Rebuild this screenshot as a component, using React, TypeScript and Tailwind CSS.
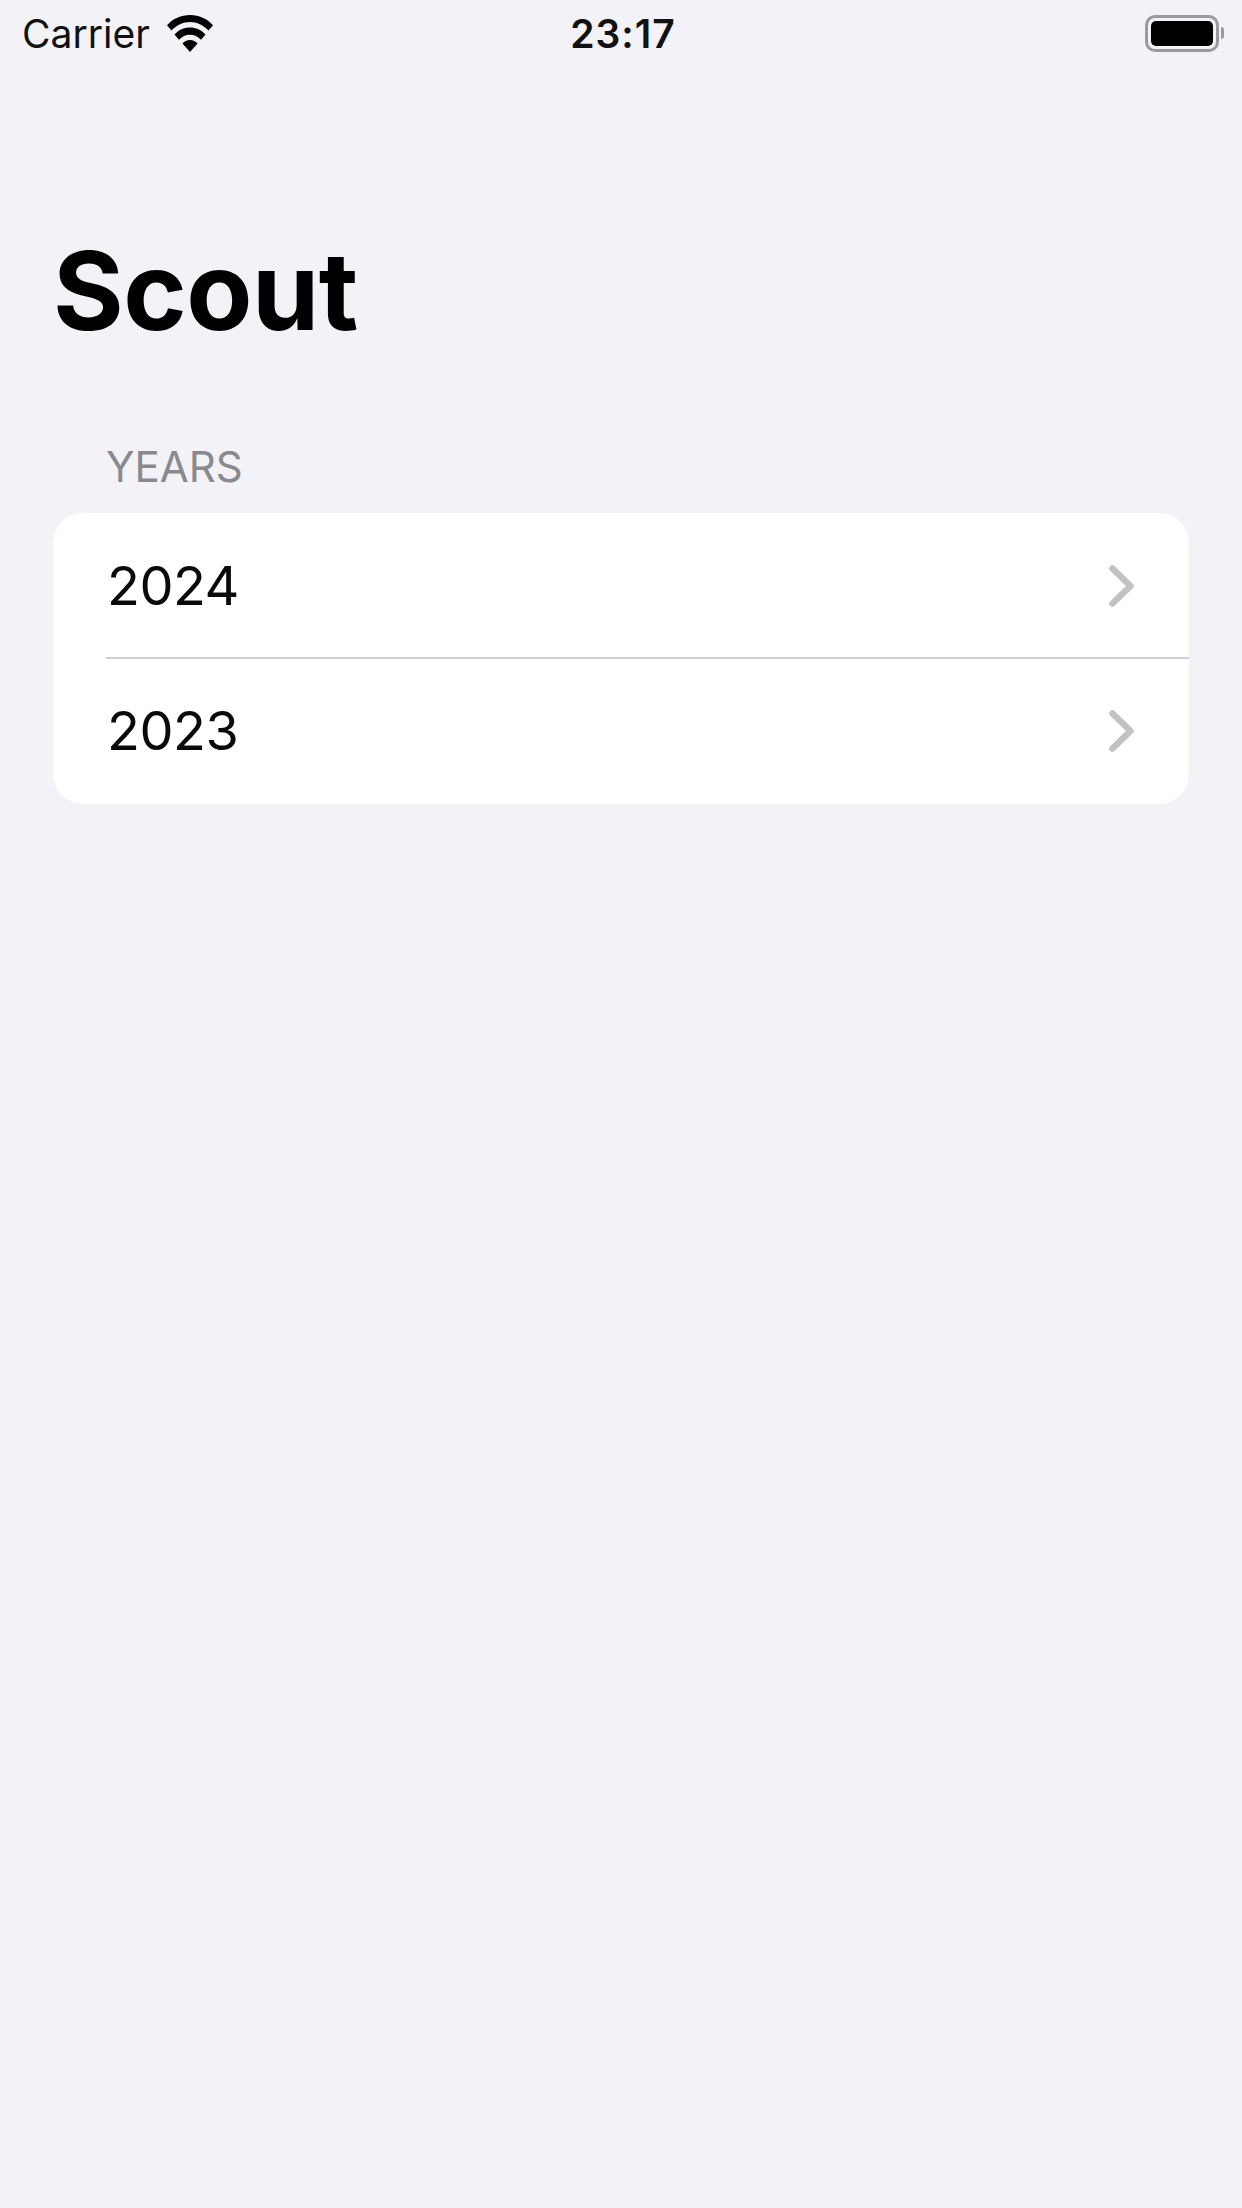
function WifiIcon() {
  return (
    <svg viewBox="0 0 48 37" className="w-[48px] h-[37px] ml-[16px]">
      <path d="M24 0C15 0 7 3.700 1 10.200l4.500 5.200C10.500 10.200 17 7 24 7s13.500 3.200 18.500 8.400l4.500-5.200C41 3.700 33 0 24 0z" fill="#000" />
      <path d="M24 12.500c-6 0-11.500 2.600-15.500 7l4.500 5.200c2.900-3.100 6.700-5 11-5s8.100 1.900 11 5l4.500-5.200c-4-4.400-9.500-7-15.500-7z" fill="#000" />
      <path d="M24 25c-3 0-5.600 1.300-7.500 3.400L24 37l7.500-8.600C29.600 26.300 27 25 24 25z" fill="#000" />
    </svg>
  );
}

function BatteryIcon() {
  return (
    <div className="flex items-center">
      <div className="w-[74px] h-[37px] rounded-[10px] border-[3px] border-[#9a9a9e] p-[3px]">
        <div className="w-full h-full rounded-[5px] bg-black" />
      </div>
      <div className="w-[3px] h-[12px] ml-[2px] rounded-r-[3px] bg-[#9a9a9e]" />
    </div>
  );
}

function YearRow({ year, divider }: { year: string; divider?: boolean }) {
  return (
    <div className="h-[145.5px] flex items-center pl-[54px] pr-[54px] relative">
      <span className="text-[54px] text-[#0a0a0a] leading-none tracking-[-0.5px]">{year}</span>
      <svg viewBox="0 0 28 44" className="w-[28px] h-[44px] ml-auto mr-[-1px]">
        <path d="M4.500 4.500L22.500 22L4.500 39.500" fill="none" stroke="#c2c2c4" strokeWidth="6.500" strokeLinecap="round" strokeLinejoin="round" />
      </svg>
      {divider && <div className="absolute left-[53px] right-0 bottom-[-0.5px] h-[2px] bg-[#cfcfd2]" />}
    </div>
  );
}

export default function App() {
  return (
    <div className="w-[1242px] h-[2208px] bg-[#f2f2f7] font-['Inter',sans-serif] overflow-hidden">
      <div className="h-[66px] grid grid-cols-3 items-center pl-[22px] pr-[18px]">
        <div className="flex items-center">
          <span className="text-[39px] leading-none text-[#111]">Carrier</span>
          <WifiIcon />
        </div>
        <div className="text-center text-[39px] leading-none font-semibold text-[#111] tracking-[1px]">23:17</div>
        <div className="flex justify-end">
          <BatteryIcon />
        </div>
      </div>

      <div className="px-[53px]">
        <h1 className="mt-[164px] text-[108px] leading-[122px] font-bold text-black tracking-[-0.5px]">Scout</h1>

        <div className="mt-[91px] pl-[53px] text-[42px] leading-[48px] text-[#8a8a8e]">YEARS</div>

        <div className="mt-[22px] bg-white rounded-[30px] overflow-hidden">
          <YearRow year="2024" divider />
          <YearRow year="2023" />
        </div>
      </div>
    </div>
  );
}
